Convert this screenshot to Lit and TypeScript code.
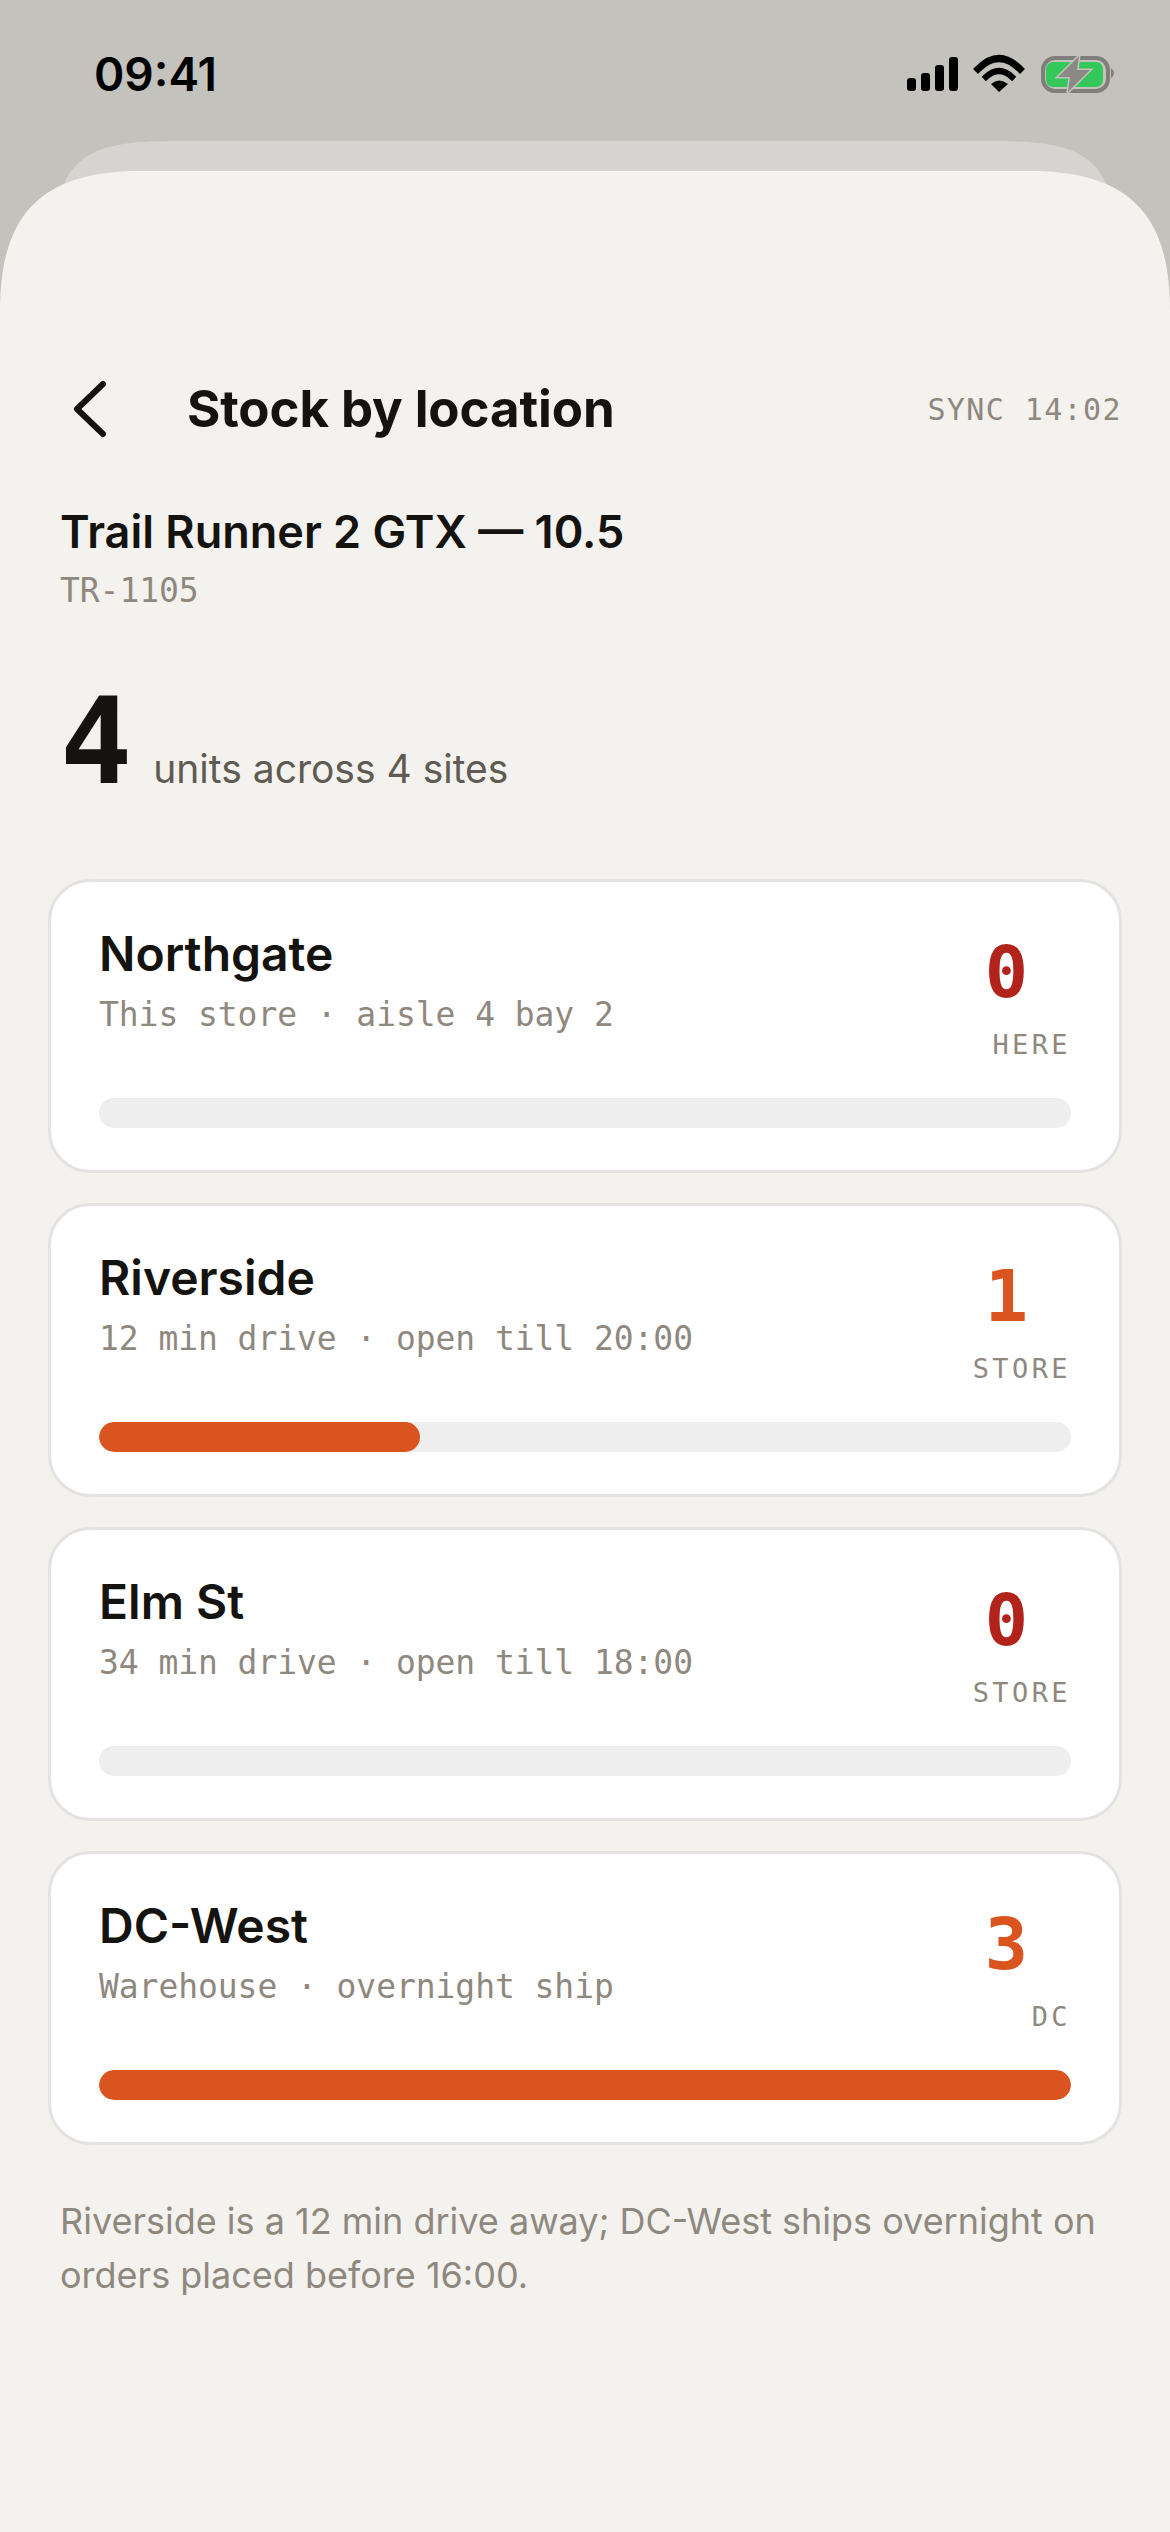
import { LitElement, html, css } from "lit";
import { customElement } from "lit/decorators.js";

const sites = [
  { name: "Northgate", sub: "This store · aisle 4 bay 2", qty: 0, tag: "HERE", fill: 0 },
  { name: "Riverside", sub: "12 min drive · open till 20:00", qty: 1, tag: "STORE", fill: 33 },
  { name: "Elm St", sub: "34 min drive · open till 18:00", qty: 0, tag: "STORE", fill: 0 },
  { name: "DC-West", sub: "Warehouse · overnight ship", qty: 3, tag: "DC", fill: 100 },
];

@customElement("app-root")
class AppRoot extends LitElement {
  render() {
    return html`
      <div class="status">
        <span class="time">09:41</span>
        <svg class="status-icons" width="210" height="40" viewBox="907 54 210 40">
          <rect x="907" y="78" width="9" height="13" rx="3"></rect>
          <rect x="921" y="73" width="9" height="18" rx="3"></rect>
          <rect x="935" y="65" width="9" height="26" rx="3"></rect>
          <rect x="949" y="57" width="9" height="34" rx="3"></rect>
          <path d="M978 69Q999 48 1020 69" fill="none" stroke="#000" stroke-width="7" stroke-linecap="square"></path>
          <path d="M986 77Q999 65 1012 77" fill="none" stroke="#000" stroke-width="6" stroke-linecap="square"></path>
          <path d="M991 84Q999 77 1008 84L999 92Z"></path>
          <rect x="1043" y="58" width="65" height="33" rx="12" fill="none" stroke="#7f7e7a" stroke-width="4"></rect>
          <rect x="1046" y="62" width="57" height="25" rx="7" fill="#34c759"></rect>
          <path d="M1111 68Q1117 73 1111 78Z" fill="#7f7e7a"></path>
          <path d="M1079 56L1058 77H1070L1068 92L1090 70H1077Z" fill="#8a8986" stroke="#c3c2bd" stroke-width="3" paint-order="stroke"></path>
        </svg>
      </div>
      <div class="peek"></div>
      <main class="sheet">
        <header class="head">
          <svg class="back" width="36" height="60" viewBox="0 0 36 60">
            <path d="M31 5L5 30L31 55" fill="none" stroke="#14130f" stroke-width="6" stroke-linecap="round" stroke-linejoin="round"></path>
          </svg>
          <h1>Stock by location</h1>
          <span class="sync">SYNC 14:02</span>
        </header>
        <section class="product">
          <h2>Trail Runner 2 GTX — 10.5</h2>
          <div class="sku">TR-1105</div>
        </section>
        <section class="total">
          <span class="total-num">4</span>
          <span class="total-text">units across 4 sites</span>
        </section>
        <section class="cards">
          ${sites.map(
            (s) => html`
              <article class="card">
                <div class="card-top">
                  <div class="card-info">
                    <div class="name">${s.name}</div>
                    <div class="sub">${s.sub}</div>
                  </div>
                  <div class="card-qty">
                    <div class="qty ${s.qty === 0 ? "none" : ""}">${s.qty}</div>
                    <div class="tag">${s.tag}</div>
                  </div>
                </div>
                <div class="bar"><div class="bar-fill" style="width: ${s.fill}%"></div></div>
              </article>
            `
          )}
        </section>
        <p class="note">Riverside is a 12 min drive away; DC-West ships overnight on orders placed before 16:00.</p>
      </main>
    `;
  }

  static styles = css`
    :host {
      display: block;
      width: 1170px;
      height: 2532px;
      overflow: hidden;
      background: #c3c2bd;
      font-family: Inter, "Liberation Sans", sans-serif;
      color: #14130f;
    }

    .status {
      height: 141px;
      box-sizing: border-box;
      padding: 46px 53px 0 94px;
      display: flex;
      justify-content: space-between;
      align-items: flex-start;
    }

    .time {
      font-size: 46px;
      line-height: 56px;
      font-weight: 600;
      color: #000;
    }

    .status-icons {
      display: block;
      margin-top: 8px;
    }

    .peek {
      height: 150px;
      margin: 0 54px -120px;
      background: #d5d4d0;
      clip-path: path("M0 70C15 10 45 0 123 0H939C1017 0 1047 10 1062 70V150H0Z");
    }

    .sheet {
      position: relative;
      height: 2361px;
      box-sizing: border-box;
      padding: 208px 48px 0;
      background: #f3f2ee;
      clip-path: path("M0 140C0 50 35 0 140 0H1030C1135 0 1170 50 1170 140V2361H0Z");
    }

    .head {
      display: flex;
      align-items: center;
      height: 60px;
      padding-left: 24px;
    }

    .back {
      display: block;
    }

    h1 {
      margin: 0 0 0 79px;
      font-size: 51px;
      line-height: 60px;
      font-weight: 700;
      letter-spacing: -0.1px;
      flex: 1;
    }

    .sync {
      font-family: "DejaVu Sans Mono", monospace;
      font-size: 30px;
      letter-spacing: 1.4px;
      color: #8f887f;
    }

    .product {
      padding: 63px 12px 0;
    }

    h2 {
      margin: 0;
      font-size: 45px;
      line-height: 60px;
      font-weight: 600;
    }

    .sku {
      font-family: "DejaVu Sans Mono", monospace;
      font-size: 33px;
      line-height: 42px;
      letter-spacing: -0.07px;
      margin-top: 8px;
      color: #8f887f;
    }

    .total {
      display: flex;
      align-items: baseline;
      gap: 21px;
      padding: 65px 12px 0;
    }

    .total-num {
      font-family: "DejaVu Sans Mono", monospace;
      font-size: 120px;
      line-height: 130px;
      font-weight: 700;
    }

    .total-text {
      font-size: 39px;
      color: #5f5a52;
    }

    .cards {
      display: flex;
      flex-direction: column;
      gap: 30px;
      margin-top: 72px;
    }

    .card {
      height: 294px;
      box-sizing: border-box;
      padding: 42px 48px;
      background: #fff;
      border: 3px solid #e4e3e1;
      border-radius: 42px;
      display: flex;
      flex-direction: column;
      justify-content: space-between;
    }

    .card-top {
      display: flex;
      justify-content: space-between;
    }

    .name {
      font-size: 48px;
      line-height: 60px;
      font-weight: 600;
    }

    .sub {
      font-family: "DejaVu Sans Mono", monospace;
      font-size: 33px;
      line-height: 42px;
      letter-spacing: -0.07px;
      margin-top: 10px;
      color: #8f887f;
    }

    .card-qty {
      display: flex;
      flex-direction: column;
      align-items: flex-end;
    }

    .qty {
      font-family: "DejaVu Sans Mono", monospace;
      font-size: 72px;
      line-height: 84px;
      font-weight: 700;
      color: #d9541e;
      margin: 6px 43px 0 0;
    }

    .qty.none {
      color: #b2231b;
    }

    .tag {
      font-family: "DejaVu Sans Mono", monospace;
      font-size: 27px;
      line-height: 34px;
      letter-spacing: 3.4px;
      color: #8f887f;
      margin-top: 14px;
    }

    .bar {
      height: 30px;
      border-radius: 15px;
      background: #eeeeee;
      overflow: hidden;
    }

    .bar-fill {
      height: 100%;
      border-radius: 15px;
      background: #d9541e;
    }

    .note {
      margin: 49px 12px 0;
      font-size: 36px;
      line-height: 54px;
      color: #8f887f;
    }
  `;
}
